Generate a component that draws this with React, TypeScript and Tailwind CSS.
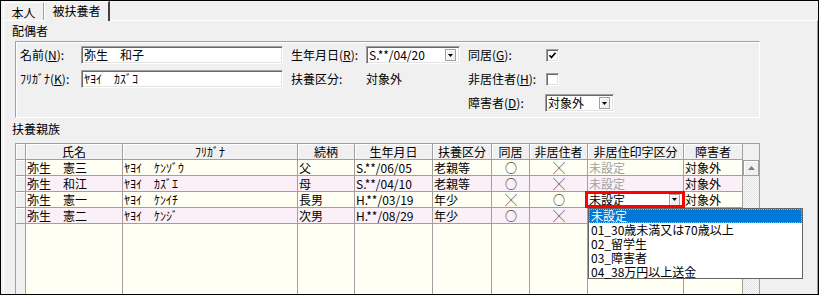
import React from 'react';

type Row = {
  name: string;
  kana: string;
  rel: string;
  birth: string;
  kubun: string;
  dokyo: string;
  hikyo: string;
  inji: 'gray' | 'combo' | 'hidden';
  shogai: string;
  pink: boolean;
};

const rows: Row[] = [
  { name: '弥生　憲三', kana: 'ﾔﾖｲ　ｹﾝｿﾞｳ', rel: '父', birth: 'S.**/06/05', kubun: '老親等', dokyo: '○', hikyo: '╳', inji: 'gray', shogai: '対象外', pink: false },
  { name: '弥生　和江', kana: 'ﾔﾖｲ　ｶｽﾞｴ', rel: '母', birth: 'S.**/04/10', kubun: '老親等', dokyo: '○', hikyo: '╳', inji: 'gray', shogai: '対象外', pink: true },
  { name: '弥生　憲一', kana: 'ﾔﾖｲ　ｹﾝｲﾁ', rel: '長男', birth: 'H.**/03/19', kubun: '年少', dokyo: '╳', hikyo: '○', inji: 'combo', shogai: '対象外', pink: false },
  // 4行目の右2列はドロップダウンの下に隠れている
  { name: '弥生　憲二', kana: 'ﾔﾖｲ　ｹﾝｼﾞ', rel: '次男', birth: 'H.**/08/29', kubun: '年少', dokyo: '○', hikyo: '╳', inji: 'hidden', shogai: '', pink: true },
];

const options = ['未設定', '01_30歳未満又は70歳以上', '02_留学生', '03_障害者', '04_38万円以上送金'];

const line = 'border-[#a0a0a0]';
const sunken =
  'bg-white border-t border-l border-[#a0a0a0] border-r border-b border-r-white border-b-white shadow-[inset_1px_1px_0_#696969,inset_-1px_-1px_0_#e3e3e3]';

function DropButton() {
  return (
    <div className="w-[11px] h-[12px] bg-[#f0f0f0] border border-[#a0a0a0] shadow-[inset_1px_1px_0_white] flex items-center justify-center">
      <svg width="5" height="3" viewBox="0 0 5 3">
        <polygon points="0,0 5,0 2.5,3" fill="#000" />
      </svg>
    </div>
  );
}

function CheckBox({ checked }: { checked?: boolean }) {
  return (
    <div className={`w-[13px] h-[13px] ${sunken} flex items-center justify-center`}>
      {checked && (
        <svg width="9" height="9" viewBox="0 0 9 9">
          <polyline points="1.5,4.2 3.5,6.5 7.5,1.8" fill="none" stroke="#000" strokeWidth="1.7" />
        </svg>
      )}
    </div>
  );
}

function Cell({ w, children, className = '' }: { w: string; children?: React.ReactNode; className?: string }) {
  return (
    <div className={`${w} shrink-0 h-full border-r ${line} pl-[1px] whitespace-nowrap overflow-hidden ${className}`}>
      {children}
    </div>
  );
}

export default function App() {
  return (
    <div className="w-[819px] h-[295px] overflow-hidden bg-[#f0f0f0] border border-black flex flex-col text-[12px] leading-[14px] text-black font-['MS_UI_Gothic','Noto_Sans_CJK_JP',sans-serif]">
      {/* タブ */}
      <div className="h-[19px] flex items-end pl-[2px] shrink-0">
        <div className="w-[41px] h-[18px] border-t border-l border-white border-r border-r-[#a0a0a0] flex items-center justify-center pt-[3px]">
          本人
        </div>
        <div className="relative z-10 w-[66px] h-[20px] -mb-[1px] bg-[#f0f0f0] border-t border-l border-white border-r-2 border-r-[#404040] flex items-start justify-center pt-[2px]">
          被扶養者
        </div>
      </div>

      <div className="flex-1 min-h-0 flex flex-col border-t border-l border-white border-r border-r-[#a0a0a0] ml-[2px]">
        <div className="mt-[3px] pl-[8px]">配偶者</div>

        {/* 配偶者 */}
        <div className="mt-[3px] ml-[11px] w-[745px] h-[77px] shrink-0 border-t border-l border-[#a0a0a0] border-r border-b border-r-white border-b-white shadow-[inset_1px_1px_0_white] pt-[4px] pl-[4px] flex">
          <div className="flex flex-col gap-[6px]">
            <div className="flex items-center h-[18px]">
              <div className="w-[61px]">名前(<span className="underline">N</span>):</div>
              <div className={`w-[202px] h-[18px] ${sunken} pl-[2px] leading-[16px]`}>弥生　和子</div>
            </div>
            <div className="flex items-center h-[18px]">
              <div className="w-[61px]">ﾌﾘｶﾞﾅ(<span className="underline">K</span>):</div>
              <div className={`w-[202px] h-[18px] ${sunken} pl-[2px] leading-[16px]`}>ﾔﾖｲ　ｶｽﾞｺ</div>
            </div>
          </div>

          <div className="flex flex-col gap-[6px] ml-[8px]">
            <div className="flex items-center h-[18px]">
              <div className="w-[75px]">生年月日(<span className="underline">R</span>):</div>
              <div className={`w-[94px] h-[18px] ${sunken} pl-[2px] pr-[3px] flex items-center justify-between`}>
                <span className="leading-[14px]">S.**/04/20</span>
                <DropButton />
              </div>
            </div>
            <div className="flex items-center h-[18px]">
              <div className="w-[75px]">扶養区分:</div>
              <div>対象外</div>
            </div>
          </div>

          <div className="flex flex-col gap-[6px] ml-[8px]">
            <div className="flex items-center h-[18px]">
              <div className="w-[78px]">同居(<span className="underline">G</span>):</div>
              <CheckBox checked />
            </div>
            <div className="flex items-center h-[18px]">
              <div className="w-[78px]">非居住者(<span className="underline">H</span>):</div>
              <CheckBox />
            </div>
            <div className="flex items-center h-[18px]">
              <div className="w-[77px]">障害者(<span className="underline">D</span>):</div>
              <div className={`w-[69px] h-[18px] ${sunken} pl-[2px] pr-[3px] flex items-center justify-between`}>
                <span>対象外</span>
                <DropButton />
              </div>
            </div>
          </div>
        </div>

        <div className="mt-[4px] pl-[8px]">扶養親族</div>

        {/* 扶養親族 */}
        <div className={`mt-[7px] ml-[11px] w-[745px] flex-1 min-h-0 flex border-t border-l ${line}`}>
          <div className="flex flex-col w-[727px]">
            <div className={`flex h-[16px] shrink-0 border-b ${line} bg-[#f0f0f0] leading-[15px] text-center`}>
              <div className={`w-[10px] h-full border-r ${line} shadow-[inset_1px_1px_0_white]`} />
              {[
                ['w-[97px]', '氏名'],
                ['w-[175px]', 'ﾌﾘｶﾞﾅ'],
                ['w-[57px]', '続柄'],
                ['w-[78px]', '生年月日'],
                ['w-[59px]', '扶養区分'],
                ['w-[38px]', '同居'],
                ['w-[58px]', '非居住者'],
                ['w-[96px]', '非居住印字区分'],
                ['w-[59px]', '障害者'],
              ].map(([w, t]) => (
                <div key={t} className={`${w} shrink-0 h-full border-r ${line} shadow-[inset_1px_1px_0_white] whitespace-nowrap overflow-hidden`}>
                  {t}
                </div>
              ))}
            </div>

            {rows.map((r) => (
              <div
                key={r.name}
                className={`flex h-[16px] shrink-0 border-b ${line} leading-[15px] ${r.pink ? 'bg-[#fcf0f8]' : 'bg-[#fffff4]'}`}
              >
                <div className={`w-[10px] h-full border-r ${line} bg-[#f0f0f0] shadow-[inset_1px_1px_0_white]`} />
                <Cell w="w-[97px]">{r.name}</Cell>
                <Cell w="w-[175px]">{r.kana}</Cell>
                <Cell w="w-[57px]">{r.rel}</Cell>
                <Cell w="w-[78px]">{r.birth}</Cell>
                <Cell w="w-[59px]">{r.kubun}</Cell>
                <Cell w="w-[38px]" className="text-center pl-0">{r.dokyo}</Cell>
                <Cell w="w-[58px]" className="text-center pl-0">{r.hikyo}</Cell>
                {r.inji === 'combo' ? (
                  <div className={`w-[96px] shrink-0 h-full border-r ${line} relative`}>
                    <div className="h-full bg-white flex items-center justify-between pl-[1px] pr-[3px]">
                      <span>未設定</span>
                      <DropButton />
                    </div>
                    <div className="absolute -left-[3px] -top-[1px] w-[100px] h-[17px] border-[3px] border-[#ff0000]" />
                    <div className="absolute left-0 top-[16px] z-20 w-[215px] h-[71px] bg-white border border-[#646464] flex flex-col">
                      {options.map((o, i) => (
                        <div
                          key={o}
                          className={`h-[14px] shrink-0 leading-[14px] pl-[2px] whitespace-nowrap ${
                            i === 0 ? 'bg-[#0078d7] text-white outline-1 outline-dotted outline-[#ff9f3f] -outline-offset-1' : ''
                          }`}
                        >
                          {o}
                        </div>
                      ))}
                    </div>
                  </div>
                ) : (
                  <Cell w="w-[96px]" className="text-[#a0a0a0]">{r.inji === 'gray' ? '未設定' : ''}</Cell>
                )}
                <Cell w="w-[59px]">{r.shogai}</Cell>
              </div>
            ))}

            <div className="flex flex-1 min-h-0 bg-[#fffff4]">
              <div className={`w-[10px] h-full border-r ${line} bg-[#f0f0f0]`} />
              <Cell w="w-[97px]" />
              <Cell w="w-[175px]" />
              <Cell w="w-[57px]" />
              <Cell w="w-[78px]" />
              <Cell w="w-[59px]" />
              <Cell w="w-[38px]" />
              <Cell w="w-[58px]" />
              <Cell w="w-[96px]" />
              <Cell w="w-[59px]" />
            </div>
          </div>

          {/* スクロールバー */}
          <div className={`w-[17px] shrink-0 flex flex-col border-r ${line}`}>
            <div className="h-[16px] shrink-0 bg-[#f0f0f0]" />
            <div className="h-[16px] shrink-0 bg-[#f0f0f0] border border-[#a0a0a0] shadow-[inset_1px_1px_0_white] flex items-center justify-center">
              <svg width="7" height="4" viewBox="0 0 7 4">
                <polygon points="0,4 7,4 3.5,0" fill="#808080" />
              </svg>
            </div>
            <div className="flex-1 bg-[repeating-conic-gradient(#e4e4e4_0_25%,#f8f8f8_0_50%)] bg-[length:2px_2px]" />
          </div>
        </div>
      </div>
    </div>
  );
}
